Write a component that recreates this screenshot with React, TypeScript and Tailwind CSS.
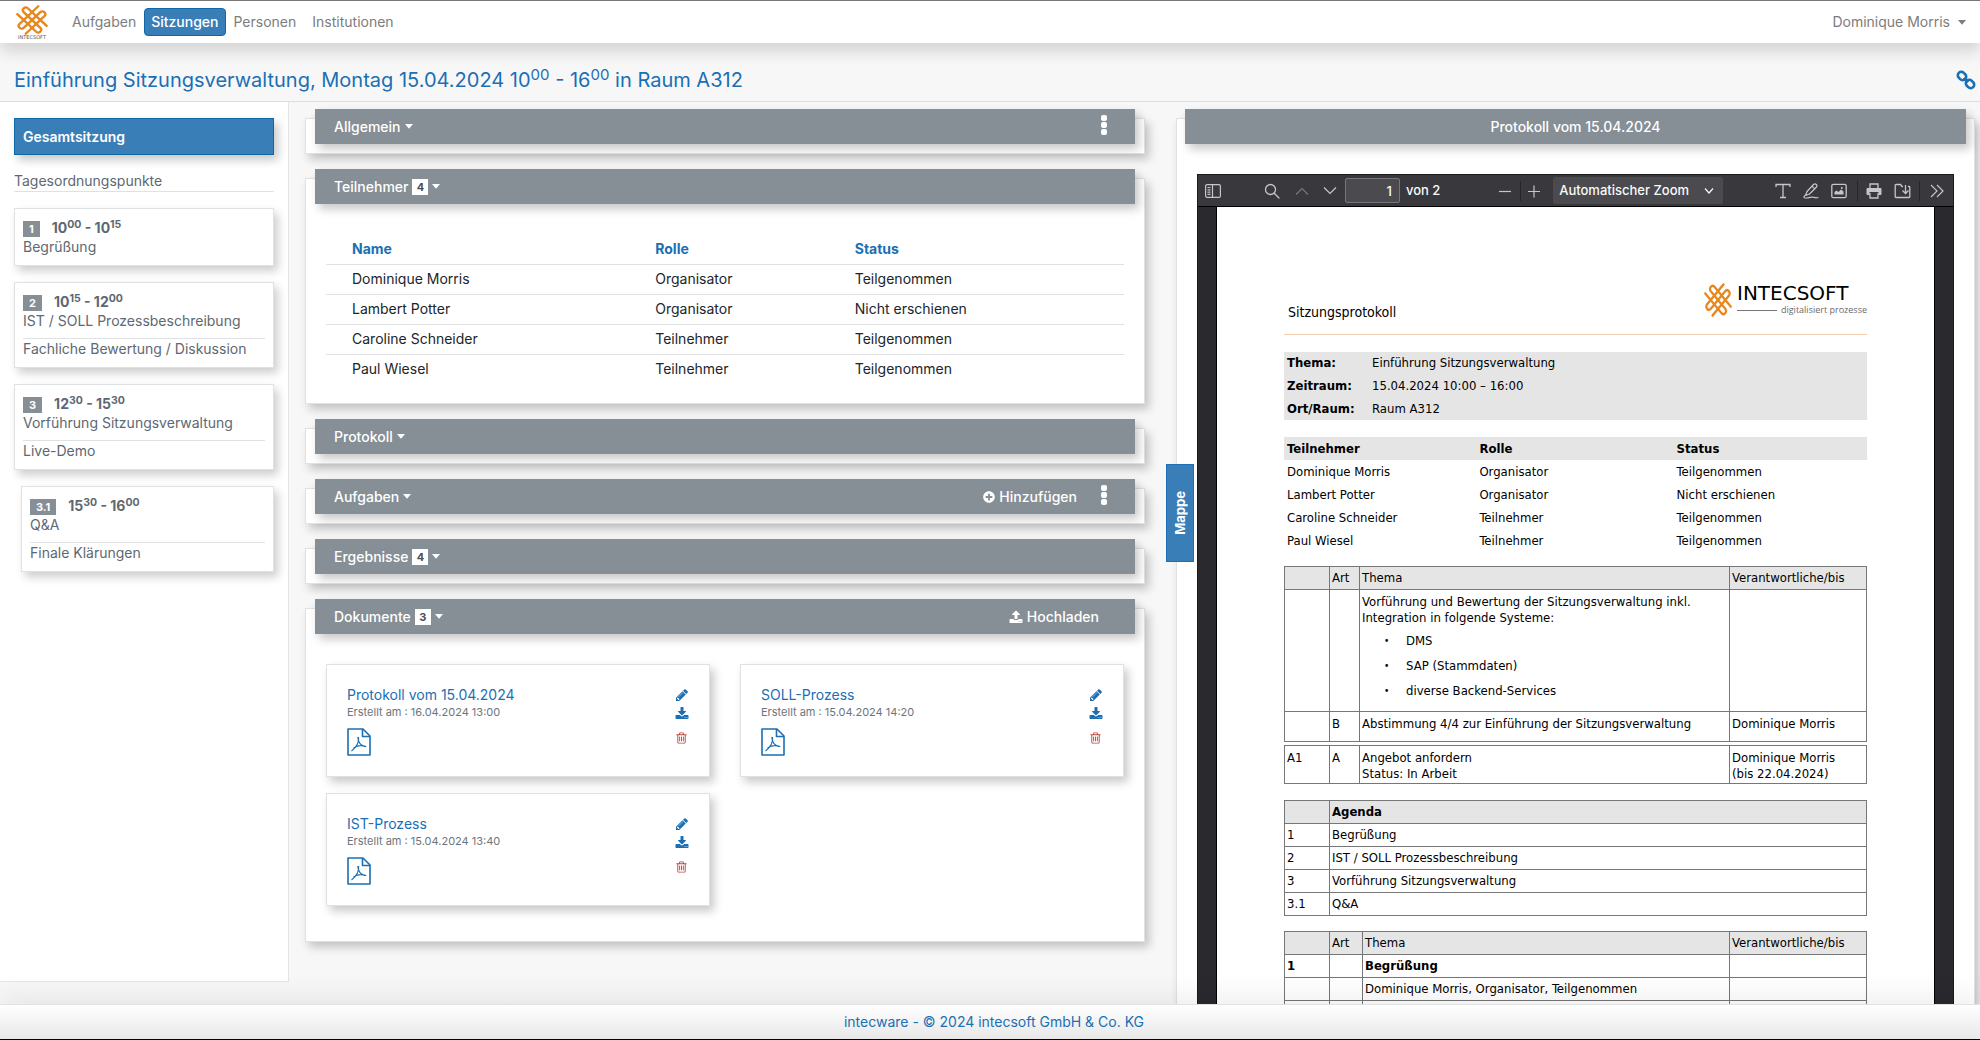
import React from "react"
import { FaPlusCircle } from "react-icons/fa"

const navItems = ["Aufgaben", "Sitzungen", "Personen", "Institutionen"]

const agenda = [
    { nr: "1", from: ["10", "00"], to: ["10", "15"], title: "Begrüßung", note: "", sub: false },
    { nr: "2", from: ["10", "15"], to: ["12", "00"], title: "IST / SOLL Prozessbeschreibung", note: "Fachliche Bewertung / Diskussion", sub: false },
    { nr: "3", from: ["12", "30"], to: ["15", "30"], title: "Vorführung Sitzungsverwaltung", note: "Live-Demo", sub: false },
    { nr: "3.1", from: ["15", "30"], to: ["16", "00"], title: "Q&A", note: "Finale Klärungen", sub: true },
]

const people = [
    ["Dominique Morris", "Organisator", "Teilgenommen"],
    ["Lambert Potter", "Organisator", "Nicht erschienen"],
    ["Caroline Schneider", "Teilnehmer", "Teilgenommen"],
    ["Paul Wiesel", "Teilnehmer", "Teilgenommen"],
]

const documents = [
    { name: "Protokoll vom 15.04.2024", created: "16.04.2024 13:00" },
    { name: "SOLL-Prozess", created: "15.04.2024 14:20" },
    { name: "IST-Prozess", created: "15.04.2024 13:40" },
]

const facts = [
    ["Thema:", "Einführung Sitzungsverwaltung"],
    ["Zeitraum:", "15.04.2024 10:00 – 16:00"],
    ["Ort/Raum:", "Raum A312"],
]

const systems = ["DMS", "SAP (Stammdaten)", "diverse Backend-Services"]

const topics = [
    ["1", "Begrüßung"],
    ["2", "IST / SOLL Prozessbeschreibung"],
    ["3", "Vorführung Sitzungsverwaltung"],
    ["3.1", "Q&A"],
]

const PENCIL = "M491 1536l91-91-235-235-91 91v107h128v128h107zm523-928q0-22-22-22-10 0-17 7l-542 542q-7 7-7 17 0 22 22 22 10 0 17-7l542-542q7-7 7-17zm-54-192l416 416-832 832h-416v-416zm683 96q0 53-37 90l-166 166-416-416 166-165q36-38 90-38 53 0 91 38l235 234q37 39 37 91z"
const DOWNLOAD = "M1344 1344q0-26-19-45t-45-19-45 19-19 45 19 45 45 19 45-19 19-45zm256 0q0-26-19-45t-45-19-45 19-19 45 19 45 45 19 45-19 19-45zm128-224v320q0 40-28 68t-68 28h-1472q-40 0-68-28t-28-68v-320q0-40 28-68t68-28h465l135 136q58 56 136 56t136-56l136-136h464q40 0 68 28t28 68zm-325-569q17 41-14 70l-448 448q-18 19-45 19t-45-19l-448-448q-31-29-14-70 17-39 59-39h256v-448q0-26 19-45t45-19h256q26 0 45 19t19 45v448h256q42 0 59 39z"
const UPLOAD = "M1344 1472q0-26-19-45t-45-19-45 19-19 45 19 45 45 19 45-19 19-45zm256 0q0-26-19-45t-45-19-45 19-19 45 19 45 45 19 45-19 19-45zm128-224v320q0 40-28 68t-68 28h-1472q-40 0-68-28t-28-68v-320q0-40 28-68t68-28h427q21 56 70.500 92t110.500 36h256q61 0 110.500-36t70.500-92h427q40 0 68 28t28 68zm-325-648q-17 40-59 40h-256v448q0 26-19 45t-45 19h-256q-26 0-45-19t-19-45v-448h-256q-42 0-59-40-17-39 14-69l448-448q18-19 45-19t45 19l448 448q31 30 14 69z"
const TRASH = "M704 736v576q0 14-9 23t-23 9h-64q-14 0-23-9t-9-23v-576q0-14 9-23t23-9h64q14 0 23 9t9 23zm256 0v576q0 14-9 23t-23 9h-64q-14 0-23-9t-9-23v-576q0-14 9-23t23-9h64q14 0 23 9t9 23zm256 0v576q0 14-9 23t-23 9h-64q-14 0-23-9t-9-23v-576q0-14 9-23t23-9h64q14 0 23 9t9 23zm128 724v-948h-896v948q0 22 7 40.500t14.500 27 10.500 8.500h832q3 0 10.500-8.500t14.500-27 7-40.500zm-672-1076h448l-48-117q-7-9-17-11h-317q-10 2-17 11zm928 32v64q0 14-9 23t-23 9h-96v948q0 83-47 143.500t-113 60.500h-832q-66 0-113-58.500t-47-141.500v-952h-96q-14 0-23-9t-9-23v-64q0-14 9-23t23-9h309l70-167q15-37 54-63t79-26h320q40 0 79 26t54 63l70 167h309q14 0 23 9t9 23z"

const Glyph = ({ d, className }: { d: string; className: string }) => (
    <svg viewBox="0 0 1792 1792" fill="currentColor" className={className}><path d={d} /></svg>
)

const Caret = () => (
    <svg viewBox="0 0 8 5" fill="currentColor" className="w-2 h-[5px]"><path d="M0 0h8L4 4.800z" /></svg>
)

// the knot is one S-shaped cord, laid twice at a right angle
const Knot = ({ className }: { className: string }) => {
    const cord = "M65 4 L11 58 A8.500 8.500 0 0 0 23 70 L71 22 A8.500 8.500 0 0 1 83 34 L29 88"
    return (
        <svg viewBox="1 0 92 92" preserveAspectRatio="none" fill="none" stroke="#e8871e" strokeWidth="7" strokeLinecap="round" className={className}>
            <path d={cord} />
            <path d={cord} transform="rotate(90 47 46)" />
        </svg>
    )
}

const Dots = () => (
    <svg viewBox="0 0 6 20" fill="currentColor" className="w-[6px] h-5">
        <rect width="6" height="6" rx="2" />
        <rect y="7" width="6" height="6" rx="2" />
        <rect y="14" width="6" height="6" rx="2" />
    </svg>
)

const PdfIcon = () => (
    <svg viewBox="0 0 24 28" fill="none" stroke="currentColor" strokeWidth="1.600" strokeLinejoin="round" className="w-6 h-7">
        <path d="M1 1h15l7 7v19H1z" />
        <path d="M15.500 1v7.500H23" />
        <path d="M11.500 9c1 4-1.500 10-7 14M10.800 9c0 5 3 9.500 8.500 9.500M6.500 20c3-2 8-3 12.500-1.500" strokeWidth="1.100" />
    </svg>
)

const Time = ({ h, m }: { h: string; m: string }) => (
    <>{h}<sup className="text-[75%]">{m}</sup></>
)

type SectionProps = {
    title: string
    count?: number
    action?: React.ReactNode
    menu?: boolean
    children?: React.ReactNode
}

const Section: React.FC<SectionProps> = ({ title, count, action, menu, children }) => {
    return (
        <section className="bg-white border border-[#dfe1e3] px-[9px] pb-[9px] shadow-[4px_5px_9px_rgba(0,0,0,0.22)]">
            <header className="-mt-[10px] h-[35px] bg-[#868e96] text-white flex items-center justify-between pl-[19px] pr-7 shadow-[4px_5px_9px_rgba(0,0,0,0.22)]">
                <button className="flex items-center gap-1 text-sm font-medium">
                    {title}
                    {count && <span className="bg-white text-[#495057] text-[11px] font-bold leading-4 w-4">{count}</span>}
                    <Caret />
                </button>
                <div className="flex items-center gap-6">
                    {action}
                    {menu && <button aria-label="Menü" className="pb-1"><Dots /></button>}
                </div>
            </header>
            {children}
        </section>
    )
}

const AgendaCard = ({ item }: { item: typeof agenda[number] }) => (
    <article className={`${item.sub ? "ml-[7px]" : ""} bg-white border border-[#dfe1e3] px-2 py-[9px] text-sm text-[#5d6872] shadow-[4px_5px_9px_rgba(0,0,0,0.2)]`}>
        <div className="flex items-center h-5 font-bold">
            <span className="bg-[#868e96] text-white text-[11px] leading-4 px-[6px] mr-3 mt-[2px]">{item.nr}</span>
            <span className="leading-5">
                <Time h={item.from[0]} m={item.from[1]} /> - <Time h={item.to[0]} m={item.to[1]} />
            </span>
        </div>
        <div className="leading-[18px]">{item.title}</div>
        {item.note && <div className="mt-2 pt-px border-t border-[#dfe1e3] leading-[18px]">{item.note}</div>}
    </article>
)

const DocumentCard = ({ doc }: { doc: typeof documents[number] }) => (
    <article className="h-[113px] border border-[#dfe1e3] bg-white px-5 pt-[21px] flex justify-between items-start shadow-[4px_5px_9px_rgba(0,0,0,0.22)]">
        <div>
            <a href="#" className="block text-sm leading-[18px] text-[#1a6fb5]">{doc.name}</a>
            <div className="text-[11px] leading-4 text-[#6c757d]">Erstellt am : {doc.created}</div>
            <a href="#" aria-label="PDF öffnen" className="block mt-2 text-[#1a6fb5]"><PdfIcon /></a>
        </div>
        <div className="flex flex-col items-start pt-[2px] text-[#1a6fb5]">
            <button aria-label="Bearbeiten"><Glyph d={PENCIL} className="w-[14px] h-[14px]" /></button>
            <button aria-label="Herunterladen" className="mt-[5px]"><Glyph d={DOWNLOAD} className="w-[14px] h-[14px]" /></button>
            <button aria-label="Löschen" className="mt-[10px] text-[#c0463c]"><Glyph d={TRASH} className="w-[13px] h-[14px]" /></button>
        </div>
    </article>
)

const Sidebar = () => (
    <aside className="w-[289px] shrink-0 mb-[22px] bg-white border-r border-b border-[#e4e5e7] px-[14px] pt-4">
        <button className="w-full h-[37px] bg-[#3a7eb8] border border-[#0f67a8] text-white text-sm font-semibold text-left px-2 shadow-[4px_5px_9px_rgba(0,0,0,0.22)]">Gesamtsitzung</button>
        <h2 className="mt-4 mb-4 pb-px border-b border-[#dfe1e3] text-sm leading-[19px] text-[#5d6872]">Tagesordnungspunkte</h2>
        <div className="flex flex-col gap-4">
            {agenda.map((item) => <AgendaCard key={item.nr} item={item} />)}
        </div>
    </aside>
)

const Separator = () => <span className="w-px h-5 bg-[#26262a]" />

const Toolbar = () => (
    <div className="h-[32px] shrink-0 bg-[#38383d] border-b border-black flex items-center text-[#c6c6ca] text-[13px] font-medium">
        <button aria-label="Seitenleiste" className="ml-[7px]">
            <svg viewBox="0 0 16 14" fill="none" stroke="currentColor" strokeWidth="1.200" className="w-4 h-[14px]">
                <rect x="0.600" y="0.600" width="14.800" height="12.800" rx="1.500" />
                <path d="M7.500 1v12M2.500 3.500h3M2.500 5.800h3M2.500 8.100h3M2.500 10.400h3" />
            </svg>
        </button>
        <button aria-label="Suchen" className="ml-[43px]">
            <svg viewBox="0 0 16 16" fill="none" stroke="currentColor" strokeWidth="1.300" strokeLinecap="round" className="w-4 h-4">
                <circle cx="6.500" cy="6.500" r="5" /><path d="M10.200 10.200L15 15" />
            </svg>
        </button>
        <button aria-label="Vorherige Seite" className="ml-[15px] text-[#77777c]">
            <svg viewBox="0 0 14 8" fill="none" stroke="currentColor" strokeWidth="1.200" className="w-[14px] h-2"><path d="M1 7.500L7 1.500l6 6" /></svg>
        </button>
        <span className="ml-2"><Separator /></span>
        <button aria-label="Nächste Seite" className="ml-[6px] mr-2">
            <svg viewBox="0 0 14 8" fill="none" stroke="currentColor" strokeWidth="1.200" className="w-[14px] h-2"><path d="M1 0.500l6 6 6-6" /></svg>
        </button>
        <label className="flex items-center gap-[6px] text-[#f9f9fa]">
            <input type="text" aria-label="Seite" defaultValue="1" className="w-[55px] h-[25px] bg-[#4a4a4f] border border-[#77777b] rounded-xs text-right pr-[7px]" />
            von 2
        </label>
        <div className="flex-1 pl-[6px] flex items-center justify-center">
            <button aria-label="Verkleinern" className="mr-2">
                <svg viewBox="0 0 14 14" stroke="currentColor" strokeWidth="1.200" className="w-[14px] h-[14px]"><path d="M1 7.500h12" /></svg>
            </button>
            <Separator />
            <button aria-label="Vergrößern" className="ml-[6px] mr-3">
                <svg viewBox="0 0 14 14" stroke="currentColor" strokeWidth="1.200" className="w-[14px] h-[14px]"><path d="M1 7.500h12M7 1.500v12" /></svg>
            </button>
            <div className="relative">
                <select aria-label="Zoom" className="appearance-none w-[170px] h-[27px] bg-[#4a4a4f] text-[#f9f9fa] pl-[6px] pr-6 rounded-xs">
                    <option>Automatischer Zoom</option>
                </select>
                <svg viewBox="0 0 10 6" fill="none" stroke="#f9f9fa" strokeWidth="1.200" className="absolute right-[9px] top-[11px] w-[10px] h-[6px] pointer-events-none"><path d="M1 0.500l4 4.500 4-4.500" /></svg>
            </div>
        </div>
        <div className="flex items-center mr-2">
            <button aria-label="Text" className="mr-3">
                <svg viewBox="0 0 16 16" fill="none" stroke="currentColor" strokeWidth="1.300" className="w-4 h-4"><path d="M1 4V1.500h14V4M8 1.500v13M5 14.500h6" /></svg>
            </button>
            <button aria-label="Zeichnen" className="mr-3">
                <svg viewBox="0 0 16 16" fill="none" stroke="currentColor" strokeWidth="1.200" strokeLinejoin="round" strokeLinecap="round" className="w-4 h-4">
                    <path d="M10.500 1.500q1.500-1.200 2.800 0t0 2.800L6.500 11l-4 1.500L4 8.500zM9 3.200l2.700 2.700M1.500 12.800c-1.500 2 .5 2.500 3.500 2s4-1 5.500-.500 2.500 1 4.500.200" />
                </svg>
            </button>
            <button aria-label="Bild einfügen" className="mr-[10px]">
                <svg viewBox="0 0 16 16" fill="none" stroke="currentColor" strokeWidth="1.300" className="w-4 h-4">
                    <rect x="0.800" y="1.300" width="14.400" height="13.400" rx="1.500" />
                    <path d="M3.500 11.500V9l2-1.500 2 1.500 2.500-2.500 2.500 2v3z" fill="currentColor" stroke="none" />
                    <circle cx="10.800" cy="5" r="1" fill="currentColor" stroke="none" />
                </svg>
            </button>
            <Separator />
            <button aria-label="Drucken" className="ml-2 mr-3">
                <svg viewBox="0 0 16 16" fill="none" stroke="currentColor" strokeWidth="1.300" className="w-4 h-4">
                    <path d="M4 5V1h8v4M4 10v5h8v-5" />
                    <path d="M1.500 5h13q1 0 1 1v5q0 1-1 1H12.500V9h-9v3H1.500q-1 0-1-1V6q0-1 1-1z" fill="currentColor" stroke="none" />
                </svg>
            </button>
            <button aria-label="Speichern" className="mr-2">
                <svg viewBox="0 0 16 16" fill="none" stroke="currentColor" strokeWidth="1.300" className="w-[17px] h-4">
                    <path d="M8.500 3.500h-1l-1.500-2H1.500q-.800 0-.8.800v11.400q0 .8.800.8h13q.800 0 .8-.800V4.300q0-.8-.8-.8h-1M11 2v8M8 7.500l3 3 3-3" />
                </svg>
            </button>
            <Separator />
            <button aria-label="Mehr" className="ml-[9px]">
                <svg viewBox="0 0 16 14" fill="none" stroke="currentColor" strokeWidth="1.200" className="w-4 h-[14px]"><path d="M2 1l6 6-6 6M8 1l6 6-6 6" /></svg>
            </button>
        </div>
    </div>
)

const Protocol = () => (
    <div className="flex-1 min-h-0 overflow-hidden bg-white border-x border-black mx-[18px] px-[67px] pt-[76px] text-[13px] leading-4 text-black font-['DejaVu_Sans_Condensed','DejaVu_Sans',sans-serif] [font-stretch:condensed]">
        <header className="h-[52px] border-b border-[#f3cdae] flex justify-between items-start">
            <h1 className="pl-1 pt-5 text-sm leading-[18px]">Sitzungsprotokoll</h1>
            <div className="flex gap-[5px]">
                <Knot className="w-7 h-[34px]" />
                <div className="w-[130px] font-['DejaVu_Sans',sans-serif] [font-stretch:normal]">
                    <div className="text-xl leading-[21px]">INTECSOFT</div>
                    <div className="flex items-center gap-1 text-[#6b6b6b] text-[9px] leading-3 font-['Open_Sans',sans-serif]">
                        <span className="flex-1 h-px bg-[#777]" />
                        digitalisiert prozesse
                    </div>
                </div>
            </div>
        </header>
        <dl className="mt-[17px] h-[68px] bg-[#e5e5e5] grid grid-cols-[85px_1fr] px-[3px] items-center">
            {facts.map(([k, v]) => (
                <React.Fragment key={k}>
                    <dt className="font-bold">{k}</dt>
                    <dd>{v}</dd>
                </React.Fragment>
            ))}
        </dl>
        <table className="mt-[17px] w-full table-fixed text-left">
            <thead className="bg-[#e5e5e5]">
                <tr className="h-[23px]">
                    <th className="w-[33%] pl-[3px]">Teilnehmer</th>
                    <th className="w-[34%] pl-[3px]">Rolle</th>
                    <th className="w-[33%] pl-[2px]">Status</th>
                </tr>
            </thead>
            <tbody>
                {people.map(([name, role, status]) => (
                    <tr key={name} className="h-[23px]"><td className="pl-[3px]">{name}</td><td className="pl-[3px]">{role}</td><td className="pl-[2px]">{status}</td></tr>
                ))}
            </tbody>
        </table>
        <table className="mt-[14px] w-full table-fixed text-left [&_td]:border [&_td]:border-[#777] [&_td]:px-[2px] [&_td]:align-top [&_th]:border [&_th]:border-[#777] [&_th]:px-[2px] [&_th]:font-normal">
            <colgroup><col className="w-[45px]" /><col className="w-[30px]" /><col /><col className="w-[137px]" /></colgroup>
            <thead className="bg-[#e5e5e5]">
                <tr className="h-[23px]"><th></th><th>Art</th><th>Thema</th><th>Verantwortliche/bis</th></tr>
            </thead>
            <tbody>
                <tr className="h-[122px]">
                    <td></td>
                    <td></td>
                    <td className="pt-1">
                        Vorführung und Bewertung der Sitzungsverwaltung inkl.<br />
                        Integration in folgende Systeme:
                        <ul className="mt-[7px] pl-[22px] flex flex-col gap-[9px]">
                            {systems.map((s) => (
                                <li key={s} className="flex"><span className="w-[22px] text-[10px]">•</span>{s}</li>
                            ))}
                        </ul>
                    </td>
                    <td></td>
                </tr>
                <tr className="h-[30px]">
                    <td></td>
                    <td className="pt-1">B</td>
                    <td className="pt-1">Abstimmung 4/4 zur Einführung der Sitzungsverwaltung</td>
                    <td className="pt-1">Dominique Morris</td>
                </tr>
            </tbody>
        </table>
        <table className="mt-[3px] w-full h-[39px] table-fixed text-left [&_td]:border [&_td]:border-[#777] [&_td]:px-[2px] [&_td]:align-top">
            <colgroup><col className="w-[45px]" /><col className="w-[30px]" /><col /><col className="w-[137px]" /></colgroup>
            <tbody>
                <tr>
                    <td className="pt-1">A1</td>
                    <td className="pt-1">A</td>
                    <td className="pt-1">Angebot anfordern<br />Status: In Arbeit</td>
                    <td className="pt-1">Dominique Morris<br />(bis 22.04.2024)</td>
                </tr>
            </tbody>
        </table>
        <table className="mt-4 w-full table-fixed text-left border border-[#777]">
            <thead className="bg-[#e5e5e5]">
                <tr className="h-[23px]"><th className="w-[45px] border border-[#777]"></th><th className="pl-[2px]">Agenda</th></tr>
            </thead>
            <tbody>
                {topics.map(([nr, title]) => (
                    <tr key={nr} className="h-[23px]"><td className="border border-[#777] pl-[2px]">{nr}</td><td className="border border-[#777] pl-[2px]">{title}</td></tr>
                ))}
            </tbody>
        </table>
        <table className="mt-[15px] w-full table-fixed text-left [&_td]:border [&_td]:border-[#777] [&_td]:px-[2px] [&_th]:border [&_th]:border-[#777] [&_th]:px-[2px] [&_th]:font-normal">
            <colgroup><col className="w-[45px]" /><col className="w-[33px]" /><col /><col className="w-[137px]" /></colgroup>
            <thead className="bg-[#e5e5e5]">
                <tr className="h-[23px]"><th></th><th>Art</th><th>Thema</th><th>Verantwortliche/bis</th></tr>
            </thead>
            <tbody>
                <tr className="h-[23px] font-bold"><td>1</td><td></td><td>Begrüßung</td><td></td></tr>
                <tr className="h-[23px]"><td></td><td></td><td>Dominique Morris, Organisator, Teilgenommen</td><td></td></tr>
                <tr className="h-[23px]"><td></td><td></td><td></td><td></td></tr>
            </tbody>
        </table>
    </div>
)

const App: React.FC = () => {
    return (
        <div className="h-screen flex flex-col overflow-hidden bg-[#f7f7f7] border-t border-[#777] font-[Inter,sans-serif]">
            <nav className="relative z-10 h-[42px] shrink-0 bg-white flex items-center pl-4 pr-[14px] text-sm text-[#7d7d7d] shadow-[0_8px_16px_rgba(0,0,0,0.15)]">
                <a href="#" className="w-8 mr-4 flex flex-col items-center">
                    <Knot className="w-8 h-[30px]" />
                    <span className="text-[5px] leading-[5px] text-[#555] font-['DejaVu_Sans',sans-serif]">INTECSOFT</span>
                </a>
                <div className="flex-1 flex items-center">
                    {navItems.map((item) => (
                        <a key={item} href="#" className={item === "Sitzungen" ? "h-7 px-[6px] flex items-center rounded-sm bg-[#3a7eb8] border border-[#0f67a8] text-white font-medium" : "px-2"}>{item}</a>
                    ))}
                </div>
                <button className="flex items-center gap-2">Dominique Morris <Caret /></button>
            </nav>
            <div className="h-[59px] shrink-0 flex items-center justify-between pl-[14px] pr-1 pt-5 pb-1 border-b border-[#dcdddf] text-[#1a6fb5]">
                <h1 className="text-xl leading-7">
                    Einführung Sitzungsverwaltung, Montag 15.04.2024 <Time h="10" m="00" /> - <Time h="16" m="00" /> in Raum A312
                </h1>
                <a href="#" aria-label="Verknüpfung">
                    <svg viewBox="0 0 20 20" fill="none" stroke="#1a6fb5" strokeWidth="2.600" className="w-5 h-5">
                        <rect x="1.500" y="2.500" width="9" height="7" rx="3.500" transform="rotate(45 6 6)" />
                        <rect x="9.500" y="10.500" width="9" height="7" rx="3.500" transform="rotate(45 14 14)" />
                        <path d="M7.800 7.800l4.400 4.400" />
                    </svg>
                </a>
            </div>
            <main className="flex-1 min-h-0 flex overflow-hidden">
                <Sidebar />
                <div className="flex-[840] min-w-0 ml-4 pt-4 flex flex-col gap-6">
                    <Section title="Allgemein" menu />
                    <Section title="Teilnehmer" count={4}>
                        <table className="mt-[30px] mb-[10px] mx-[11px] w-[calc(100%-22px)] table-fixed text-left text-sm leading-5 text-[#212529]">
                            <thead className="text-[#1a6fb5]">
                                <tr className="h-[30px]">
                                    <th className="w-[38%] pl-[26px] font-bold">Name</th>
                                    <th className="w-[25%] pl-[26px] font-bold">Rolle</th>
                                    <th className="w-[37%] pl-[26px] font-bold">Status</th>
                                </tr>
                            </thead>
                            <tbody>
                                {people.map(([name, role, status]) => (
                                    <tr key={name} className="h-[30px] border-t border-[#dfe1e3]">
                                        <td className="pl-[26px]">{name}</td>
                                        <td className="pl-[26px]">{role}</td>
                                        <td className="pl-[26px]">{status}</td>
                                    </tr>
                                ))}
                            </tbody>
                        </table>
                    </Section>
                    <Section title="Protokoll" />
                    <Section title="Aufgaben" menu action={<button className="flex items-center gap-1 text-sm font-medium"><FaPlusCircle className="w-3 h-3" />Hinzufügen</button>} />
                    <Section title="Ergebnisse" count={4} />
                    <Section title="Dokumente" count={3} action={<button className="flex items-center gap-1 mr-2 text-sm font-medium"><Glyph d={UPLOAD} className="w-[14px] h-[14px]" />Hochladen</button>}>
                        <div className="grid grid-cols-2 gap-x-[30px] gap-y-4 mt-[30px] mb-[26px] mx-[11px]">
                            {documents.map((doc) => <DocumentCard key={doc.name} doc={doc} />)}
                        </div>
                    </Section>
                </div>
                <div className="flex-[799] min-w-0 ml-[31px] mr-[5px] pt-4 flex flex-col">
                    <section className="relative flex-1 min-h-0 bg-white border border-b-0 border-[#dfe1e3] flex flex-col shadow-[4px_5px_9px_rgba(0,0,0,0.22)]">
                        <h2 className="-mt-[10px] mx-2 h-[35px] shrink-0 bg-[#868e96] text-white text-sm font-medium flex items-center justify-center shadow-[4px_5px_9px_rgba(0,0,0,0.22)]">Protokoll vom 15.04.2024</h2>
                        <div className="mt-[30px] mx-5 flex-1 min-h-0 flex flex-col bg-[#2a2a2e] border-t border-x border-[#1a1a1c]">
                            <Toolbar />
                            <Protocol />
                        </div>
                        <button className="absolute -left-[11px] top-[345px] w-7 h-[98px] bg-[#3a7eb8] border border-[#1a6fb5] text-white flex items-center justify-center">
                            <span className="[writing-mode:vertical-rl] rotate-180 text-[13px] leading-4 font-bold">Mappe</span>
                        </button>
                    </section>
                </div>
            </main>
            <footer className="relative z-10 h-9 shrink-0 flex items-center justify-center pl-2 border-t border-t-[#dfe1e3] border-b border-b-black bg-linear-to-b from-white to-[#e8e8e8] text-sm shadow-[0_-6px_30px_rgba(0,0,0,0.08)]">
                <a href="#" className="text-[#1a6fb5]">intecware - © 2024 intecsoft GmbH &amp; Co. KG</a>
            </footer>
        </div>
    )
}

export default App
